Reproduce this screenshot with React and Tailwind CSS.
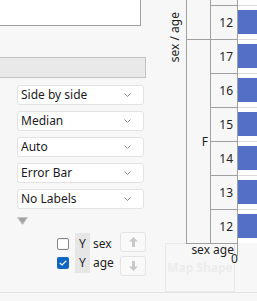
import React from 'react';

const selects = ['Side by side', 'Median', 'Auto', 'Error Bar', 'No Labels'];

// first row is only partly visible at the top, its label sits off screen
const groups = [
  { name: '', rows: ['', '12'] },
  { name: 'F', rows: ['17', '16', '15', '14', '13', '12'] },
];

const Select = ({ label }) => (
  <div className="h-[20px] w-[127px] flex items-center justify-between pl-[3px] pr-[12px] bg-white border border-[#e3e3e3] rounded-[3px] text-[12px] text-[#1b1b1b]">
    <span>{label}</span>
    <svg width="7" height="4" viewBox="0 0 7 4">
      <polyline points="0.5,0.5 3.5,3.5 6.5,0.5" fill="none" stroke="#8d8d8d" />
    </svg>
  </div>
);

const ArrowBtn = ({ down }) => (
  <div className="w-[26px] h-[20px] flex items-center justify-center bg-[#f9f9f9] border border-[#e3e3e3] rounded-[3px]">
    <svg width="9" height="10" viewBox="0 0 9 10" className={down ? 'rotate-180' : ''}>
      <polygon points="4.5,0 9,4.5 6,4.5 6,10 3,10 3,4.5 0,4.5" fill="#c8c8c8" />
    </svg>
  </div>
);

const App = () => {
  return (
    <div className="w-[257px] h-[301px] overflow-hidden bg-[#f7f7f7] flex flex-col font-['Noto_Sans','Open_Sans',sans-serif] text-[#1f1f1f]">
      <div className="h-[292px] flex overflow-hidden">
        {/* left panel */}
        <div className="w-[150px] shrink-0 flex flex-col">
          <div className="w-[141px] h-[26px] bg-white border-r border-b border-[#a0a0a0]" />
          <div className="mt-[31px] w-[146px] h-[21px] bg-[#e9e9e9] border border-l-0 border-[#c3c3c3]" />
          <div className="mt-[7px] ml-[17px] flex flex-col gap-[6px]">
            {selects.map(s => <Select key={s} label={s} />)}
          </div>
          <svg className="mt-[8px] ml-[17px]" width="11" height="8" viewBox="0 0 11 8">
            <polygon points="0.5,0.5 10.5,0.5 5.5,7.5" fill="#a3a3a3" stroke="#c4c4c4" />
          </svg>
          <div className="mt-[7px] flex pl-[57px] text-[12px]">
            <div className="mt-[1px] flex">
              <div className="pt-[1px] flex flex-col w-[12px]">
                <div className="h-[19px] flex items-center">
                  <div className="w-[12px] h-[12px] bg-white border border-[#858585] rounded-[2px]" />
                </div>
                <div className="h-[19px] flex items-center">
                  <div className="w-[12px] h-[12px] bg-[#0f67c4] rounded-[2px] flex items-center justify-center">
                    <svg width="8" height="6" viewBox="0 0 8 6">
                      <polyline points="0.8,3 3,5 7.2,0.8" fill="none" stroke="white" strokeWidth="1.2" />
                    </svg>
                  </div>
                </div>
              </div>
              <div className="ml-[6px] w-[15px] h-[40px] py-[1px] bg-[#e6e6e6] flex flex-col">
                <div className="h-[19px] flex items-center justify-center">Y</div>
                <div className="h-[19px] flex items-center justify-center">Y</div>
              </div>
              <div className="ml-[3px] w-[27px] pt-[1px] flex flex-col">
                <div className="h-[19px] flex items-center">sex</div>
                <div className="h-[19px] flex items-center">age</div>
              </div>
            </div>
            <div className="flex flex-col gap-[4px]">
              <ArrowBtn />
              <ArrowBtn down />
            </div>
          </div>
        </div>

        {/* right chart */}
        <div className="relative flex-1 flex">
          <div className="absolute left-[15px] top-[243px] w-[70px] h-[49px] border border-[#e8e8e8] flex items-center justify-center text-[12px] font-bold text-[#ececec]">
            Map Shape
          </div>
          <div className="w-[36px] shrink-0 pt-[12px] pl-[17px]">
            <div className="[writing-mode:vertical-rl] rotate-180 text-[12px] leading-[16px]">sex / age</div>
          </div>
          <div className="relative flex-1 flex flex-col mt-[-29px] text-[12px]">
            {groups.map((g, gi) => (
              <div key={gi} className="flex">
                <div className="w-[25px] shrink-0 border-l border-r border-t border-[#a0a0a0] flex items-center justify-end pr-[2px]">
                  {g.name}
                </div>
                <div className="flex-1 flex flex-col">
                  {g.rows.map((r, i) => (
                    <div key={i} className="flex h-[34px]">
                      <div className="w-[27px] shrink-0 border-t border-r border-[#a0a0a0] flex items-center justify-end pr-[4px]">
                        {r}
                      </div>
                      <div className="flex-1 bg-white border-t border-[#dcdcdc] pt-[4px] pb-[5px] overflow-hidden">
                        <div className="h-full w-[60px] bg-[#5470c6]" />
                      </div>
                    </div>
                  ))}
                </div>
              </div>
            ))}
            <div className="relative w-[52px] h-[13px] border-t border-r border-[#a0a0a0]">
              <div className="text-right pr-[3px] leading-[12px]">sex age</div>
              <div className="absolute left-[45px] top-[9px] leading-[12px]">0</div>
            </div>
          </div>
        </div>
      </div>
      <div className="border-t border-[#e3e3e3]" />
    </div>
  );
};

export default App;
